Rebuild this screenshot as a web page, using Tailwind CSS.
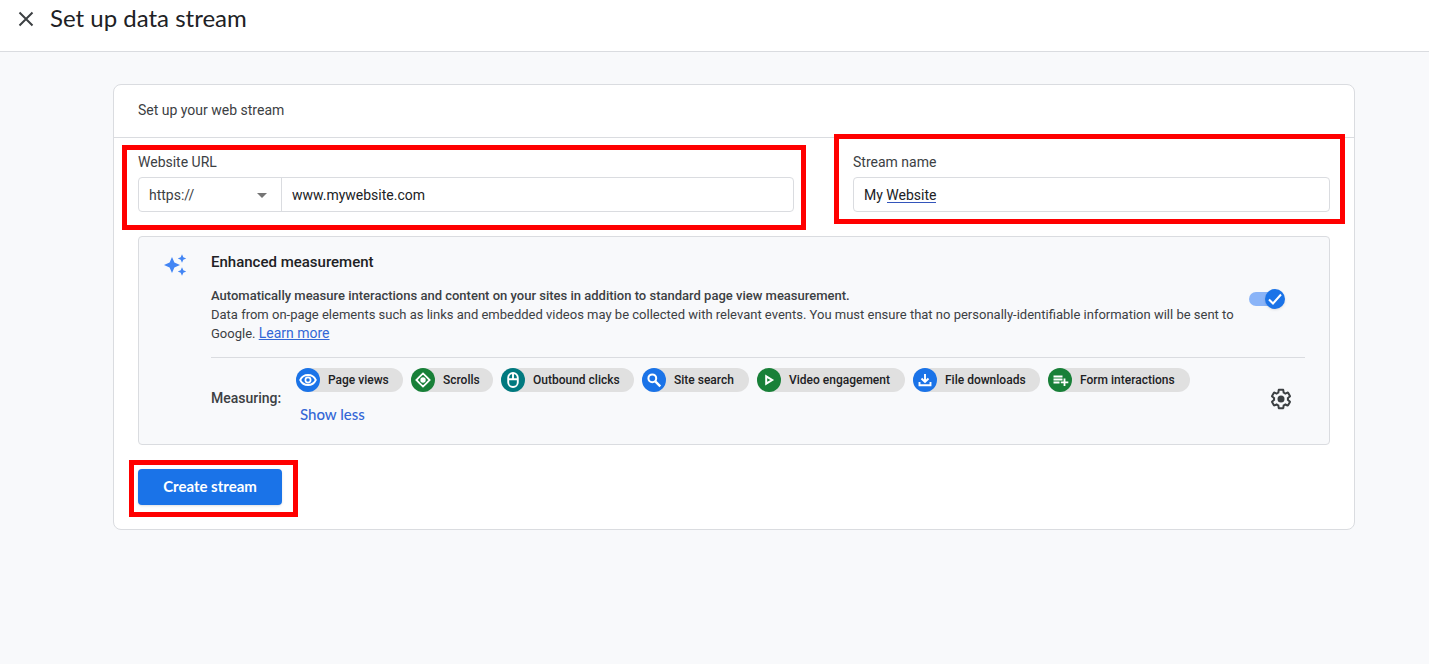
<!DOCTYPE html>
<html lang="en">
<head>
<meta charset="utf-8">
<meta name="viewport" content="width=device-width, initial-scale=1">
<title>Set up data stream</title>
<script src="https://cdn.jsdelivr.net/npm/@tailwindcss/browser@4"></script>
</head>
<body class="min-h-screen bg-[#f8f9fb] font-['Roboto',sans-serif] text-sm text-[#3c4043]">
<header class="flex h-[52px] items-start gap-[14px] border-b border-[#dadce0] bg-white pt-1 pl-4">
  <button type="button" aria-label="Close" class="mt-1 flex size-5 items-center justify-center">
    <svg class="size-5" viewBox="0 0 20 20" fill="none" stroke="#3c4043" stroke-width="2"><path d="M3.500 4.500l13 13M16.500 4.500l-13 13"/></svg>
  </button>
  <h1 class="font-['Lato',sans-serif] text-2xl leading-7 text-[#202124]">Set up data stream</h1>
</header>

<main class="pt-8 pr-[74px] pb-8 pl-[113px]">
  <section class="rounded-lg border border-[#dadce0] bg-white">
    <h2 class="border-b border-[#dadce0] px-6 pt-[15px] pb-[17px] leading-5">Set up your web stream</h2>
    <form class="px-6 pt-[14px] pb-6">
      <div class="flex gap-[59px]">
        <div class="relative flex-[656]">
          <label for="url" class="mb-[5px] block leading-5">Website URL</label>
          <div class="flex h-[35px] rounded border border-[#dadce0]">
            <div class="relative w-[143px] border-r border-[#dadce0]">
              <select aria-label="Protocol" class="h-full w-full appearance-none bg-transparent pl-[10px]"><option>https://</option><option>http://</option></select>
              <svg class="pointer-events-none absolute top-[15px] right-[14px] h-[5px] w-[10px]" viewBox="0 0 10 5" fill="#757575"><path d="M0 0h10L5 5z"/></svg>
            </div>
            <input id="url" type="text" value="www.mywebsite.com" class="min-w-0 flex-1 bg-transparent px-[10px] text-[#202124]">
          </div>
          <div class="pointer-events-none absolute -top-[7px] -right-3 -bottom-[18px] -left-4 border-5 border-[#ff0000]"></div>
        </div>
        <div class="relative flex-[477]">
          <label for="name" class="mb-[5px] block leading-5">Stream name</label>
          <div class="relative h-[35px] rounded border border-[#dadce0]">
            <input id="name" type="text" value="My Website" class="h-full w-full bg-transparent px-[10px] text-[#202124]">
            <div class="pointer-events-none absolute top-6 left-[33px] h-px w-[49px] bg-[#3355bb]"></div>
          </div>
          <div class="pointer-events-none absolute -top-[18px] -right-[15px] -bottom-3 -left-[19px] border-5 border-[#ff0000]"></div>
        </div>
      </div>

      <div class="mt-6 flex rounded-sm border border-[#dadce0] bg-[#f8f9fb] pt-[15px] pr-6 pb-4 pl-6">
        <svg class="mt-px mr-6 size-6 shrink-0" viewBox="0 0 24 24" fill="#4285f4"><path d="M9 4l2.400 5.600L17 12l-5.600 2.400L9 20l-2.400-5.600L1 12l5.600-2.400zM19 1.300l1.300 2.900 2.900 1.300-2.900 1.300L19 9.700l-1.300-2.900-2.900-1.300 2.900-1.300zM19 14.300l1.300 2.900 2.900 1.300-2.900 1.300-1.300 2.900-1.300-2.900-2.900-1.300 2.900-1.300z"/></svg>
        <div class="min-w-0 flex-1">
          <h3 class="text-[15px] leading-5 font-medium text-[#202124]">Enhanced measurement</h3>
          <div class="flex items-start justify-between border-b border-[#dadce0] pt-[15px] pb-[14px]">
            <div class="w-[1030px] text-[13px] leading-[19px]">
              <p class="leading-[18px] font-medium">Automatically measure interactions and content on your sites in addition to standard page view measurement.</p>
              <p>Data from on-page elements such as links and embedded videos may be collected with relevant events. You must ensure that no personally-identifiable information will be sent to Google. <a href="#" class="text-[14px] text-[#3367d6] underline">Learn more</a></p>
            </div>
            <label class="relative mt-0.5 mr-5 block h-5 w-9 shrink-0">
              <input type="checkbox" checked aria-label="Enhanced measurement" class="absolute top-[3px] left-0 h-[14px] w-[34px] appearance-none rounded-full bg-[#8ab4f8]">
              <svg class="pointer-events-none absolute top-0 right-0 size-5 rounded-full bg-[#1a73e8] shadow" viewBox="0 0 20 20" fill="none" stroke="#fff" stroke-width="2"><path d="M4 10.500l4 4 8-9"/></svg>
            </label>
          </div>
          <div class="flex items-center pt-[10px]">
            <span class="w-[85px] shrink-0 text-sm font-medium">Measuring:</span>
            <div class="flex-1 pb-1">
              <ul class="flex flex-wrap gap-2 text-xs leading-6 font-medium text-[#202124]">
                <li class="flex h-6 w-[107px] gap-2 rounded-full bg-[#e0e0e0]"><svg class="size-6 shrink-0" viewBox="0 0 24 24"><circle cx="12" cy="12" r="12" fill="#1a73e8"/><path d="M4.200 12C5.700 8.800 8.600 7 12 7s6.300 1.800 7.800 5c-1.500 3.200-4.400 5-7.800 5s-6.300-1.800-7.800-5z" fill="none" stroke="#fff" stroke-width="1.800"/><circle cx="12" cy="12" r="2.600" fill="none" stroke="#fff" stroke-width="1.700"/></svg>Page views</li>
                <li class="flex h-6 w-[82px] gap-2 rounded-full bg-[#e0e0e0]"><svg class="size-6 shrink-0" viewBox="0 0 24 24"><circle cx="12" cy="12" r="12" fill="#188038"/><path d="M8.700 8.700L12 5.400l3.300 3.300M8.700 15.300l3.300 3.300 3.300-3.300M8.700 8.700L5.400 12l3.300 3.300M15.300 8.700l3.300 3.300-3.300 3.300" fill="none" stroke="#fff" stroke-width="1.800"/><circle cx="12" cy="12" r="2.700" fill="#fff"/></svg>Scrolls</li>
                <li class="flex h-6 w-[133px] gap-2 rounded-full bg-[#e0e0e0]"><svg class="size-6 shrink-0" viewBox="0 0 24 24"><circle cx="12" cy="12" r="12" fill="#00797f"/><path d="M7.200 9.800a4.800 4.800 0 0 1 9.600 0v4.400a4.800 4.800 0 0 1-9.600 0zM7.200 11.200h9.600M12 5v6.200" fill="none" stroke="#fff" stroke-width="1.900"/></svg>Outbound clicks</li>
                <li class="flex h-6 w-[107px] gap-2 rounded-full bg-[#e0e0e0]"><svg class="size-6 shrink-0" viewBox="0 0 24 24"><circle cx="12" cy="12" r="12" fill="#1a73e8"/><path d="M13.300 13.300l5 5" stroke="#fff" stroke-width="2.400"/><circle cx="10.300" cy="10.300" r="3.900" fill="none" stroke="#fff" stroke-width="2"/></svg>Site search</li>
                <li class="flex h-6 w-[148px] gap-2 rounded-full bg-[#e0e0e0]"><svg class="size-6 shrink-0" viewBox="0 0 24 24"><circle cx="12" cy="12" r="12" fill="#188038"/><path d="M9.200 8.300v7.400L15.200 12z" fill="none" stroke="#fff" stroke-width="2"/></svg>Video engagement</li>
                <li class="flex h-6 w-[127px] gap-2 rounded-full bg-[#e0e0e0]"><svg class="size-6 shrink-0" viewBox="0 0 24 24"><circle cx="12" cy="12" r="12" fill="#1a73e8"/><path d="M12 6v8M8.500 10.500l3.500 3.500 3.500-3.500M6.500 14v3.200h11V14" fill="none" stroke="#fff" stroke-width="1.900"/></svg>File downloads</li>
                <li class="flex h-6 w-[142px] gap-2 rounded-full bg-[#e0e0e0]"><svg class="size-6 shrink-0" viewBox="0 0 24 24"><circle cx="12" cy="12" r="12" fill="#188038"/><path d="M5.500 8.500h9M5.500 11.500h9M5.500 14.500h6M16.500 10.500v7.500M12.800 14.300h7.500" fill="none" stroke="#fff" stroke-width="1.800"/></svg>Form interactions</li>
              </ul>
              <button type="button" class="mt-3 ml-1 block font-['Lato',sans-serif] text-[15px] leading-5 font-medium text-[#3367d6]">Show less</button>
            </div>
            <button type="button" aria-label="Configure" class="mt-0.5 mr-3 shrink-0">
              <svg class="size-6" viewBox="0 0 24 24" fill="#3c4043"><path d="M13.850 22.250h-3.700c-.740 0-1.360-.540-1.450-1.270l-.270-1.890c-.270-.140-.530-.290-.790-.460l-1.800.720c-.700.260-1.470-.030-1.810-.650L2.200 15.530c-.350-.660-.200-1.440.360-1.880l1.530-1.190c-.010-.150-.020-.300-.020-.460 0-.150.010-.310.020-.460l-1.520-1.190c-.590-.450-.740-1.260-.370-1.880l1.850-3.190c.340-.620 1.110-.900 1.790-.630l1.810.730c.260-.170.520-.320.780-.460l.270-1.910c.090-.700.710-1.250 1.440-1.250h3.700c.740 0 1.360.540 1.450 1.270l.270 1.890c.270.140.530.290.790.460l1.800-.720c.710-.260 1.480.030 1.820.650l1.840 3.180c.360.660.200 1.440-.360 1.880l-1.520 1.190c.010.150.020.300.020.460s-.010.310-.020.460l1.520 1.190c.560.450.720 1.230.370 1.860l-1.860 3.220c-.340.620-1.110.900-1.800.630l-1.800-.720c-.260.170-.520.320-.780.460l-.270 1.910c-.100.680-.720 1.220-1.460 1.220zm-3.230-2h2.760l.370-2.550.530-.220c.440-.180.880-.440 1.340-.780l.450-.340 2.380.960 1.380-2.400-2.030-1.580.070-.560c.030-.260.060-.510.060-.780s-.030-.530-.060-.780l-.070-.560 2.030-1.580-1.390-2.400-2.390.960-.450-.350c-.420-.320-.870-.580-1.330-.770l-.520-.220-.370-2.550h-2.760l-.370 2.550-.530.210c-.440.190-.880.440-1.340.790l-.450.330-2.380-.950-1.390 2.390 2.030 1.580-.070.560a7 7 0 0 0-.060.790c0 .260.020.530.060.780l.070.560-2.030 1.580 1.380 2.400 2.390-.960.450.350c.430.330.860.580 1.330.770l.530.220z"/><circle cx="12" cy="12" r="3.500"/></svg>
            </button>
          </div>
        </div>
      </div>

      <div class="relative mt-6 w-36">
        <button type="button" class="h-9 w-full rounded-sm bg-[#1a73e8] font-['Lato',sans-serif] text-[15px] font-bold text-white shadow">Create stream</button>
        <div class="pointer-events-none absolute -top-[9px] -right-4 -bottom-3 -left-[9px] border-5 border-[#ff0000]"></div>
      </div>
    </form>
  </section>
</main>
</body>
</html>
